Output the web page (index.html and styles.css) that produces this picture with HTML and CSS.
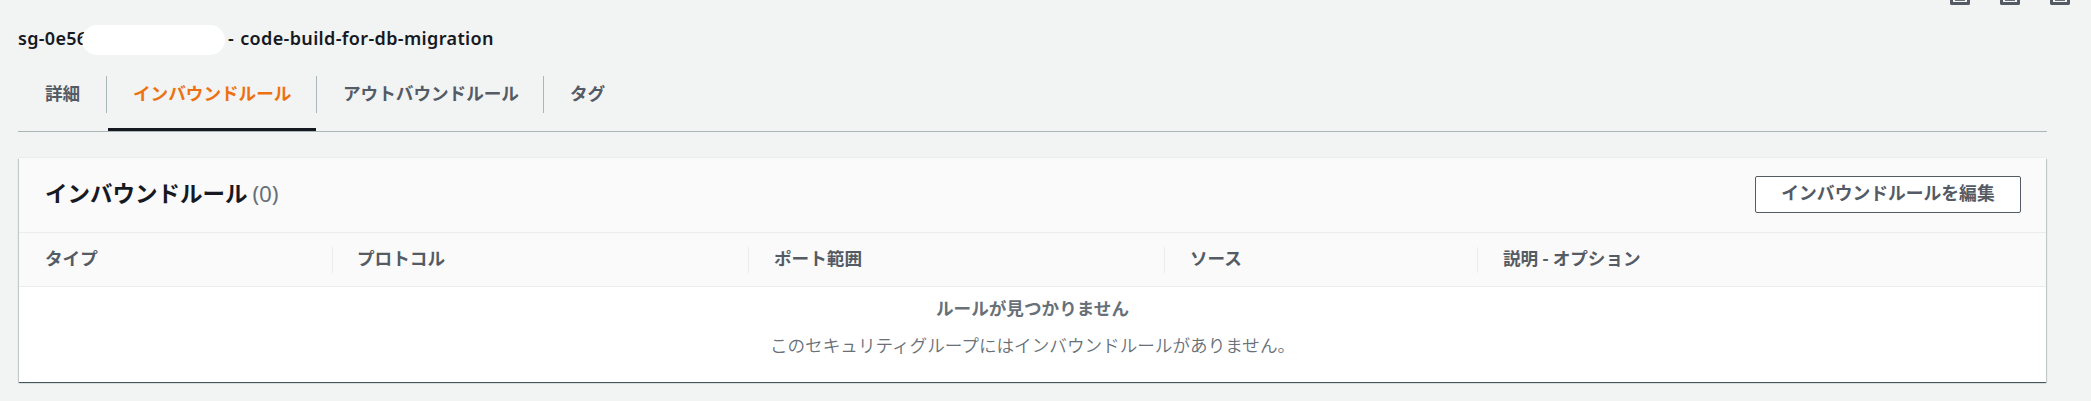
FILE: index.html
```
<!DOCTYPE html>
<html lang="ja">
<head>
<meta charset="utf-8">
<title>インバウンドルール</title>
<link rel="stylesheet" href="styles.css">
</head>
<body>
<div class="toolbar">
  <svg class="pane-icon" viewBox="0 0 20 5"><path d="M0 0h20v4l-1 1H1L0 4z" fill="#545b64"/><path d="M3 0h14v2H3z" fill="#f2f3f3"/><path d="M5 0h10v1H5z" fill="#687078"/></svg>
  <svg class="pane-icon" viewBox="0 0 20 5"><path d="M0 0h20v4l-1 1H1L0 4z" fill="#545b64"/><path d="M3 0h14v2H3z" fill="#f2f3f3"/><path d="M5 0h10v1H5z" fill="#687078"/></svg>
  <svg class="pane-icon" viewBox="0 0 20 5"><path d="M0 0h20v4l-1 1H1L0 4z" fill="#545b64"/><path d="M3 0h14v2H3z" fill="#f2f3f3"/><path d="M5 0h10v1H5z" fill="#687078"/></svg>
</div>
<main class="panel">
  <h1 class="resource"><span class="resource-id">sg-0e56</span><span class="mask"></span><span class="resource-name">- code-build-for-db-migration</span></h1>
  <nav class="tabs">
    <a class="tab tab-details"><span>詳細</span></a>
    <a class="tab tab-inbound active"><span>インバウンドルール</span></a>
    <a class="tab tab-outbound"><span>アウトバウンドルール</span></a>
    <a class="tab tab-tags"><span>タグ</span></a>
  </nav>
  <section class="card">
    <header class="card-header">
      <h2 class="card-title">インバウンドルール <span class="count">(0)</span></h2>
      <button class="edit">インバウンドルールを編集</button>
    </header>
    <div class="columns">
      <div class="col">タイプ</div>
      <div class="col">プロトコル</div>
      <div class="col">ポート範囲</div>
      <div class="col">ソース</div>
      <div class="col">説明 - オプション</div>
    </div>
    <div class="empty">
      <strong class="empty-title">ルールが見つかりません</strong>
      <p class="empty-text">このセキュリティグループにはインバウンドルールがありません。</p>
    </div>
  </section>
</main>
</body>
</html>
```
FILE: styles.css
```
* { box-sizing: border-box; }
body {
  margin: 0;
  height: 401px;
  overflow: hidden;
  background: #f2f3f3;
  color: #545b64;
  font: 17.6px/27px "Noto Sans CJK JP", sans-serif;
}
.toolbar { display: flex; justify-content: flex-end; gap: 30px; height: 5px; padding-right: 21px; }
.pane-icon { width: 20px; height: 5px; display: block; }
.panel { padding: 20px 44px 0 18px; }
.resource {
  display: flex;
  height: 30px;
  margin: 0;
  color: #16191f;
  font: 600 18px/26px "Noto Sans", "Open Sans", sans-serif;
  white-space: nowrap;
}
.resource-id { width: 64px; letter-spacing: .3px; }
.mask { position: relative; width: 143px; height: 30px; border-radius: 15px; background: #fff; }
.resource-name { margin-left: 3px; letter-spacing: .36px; word-spacing: 1px; }
.tabs { display: flex; height: 77px; padding-top: 21px; border-bottom: 1px solid #aab7b8; }
.tab { position: relative; height: 56px; font-weight: 700; white-space: nowrap; }
.tab span { display: block; height: 37px; padding: 3px 0 0 27px; border-right: 1px solid #aab7b8; }
.tab-details { width: 89px; }
.tab-inbound { width: 210px; }
.tab-outbound { width: 227px; }
.tab-tags span { border: 0; }
.tab-inbound span, .tab-outbound span, .tab-tags span { padding-left: 26px; }
.active { color: #ec7211; }
.active::after { content: ""; position: absolute; left: 1px; right: 1px; bottom: 1px; height: 3px; background: #16191f; }
.card {
  height: 224px;
  margin: 26px 1px 0;
  background: #fff;
  box-shadow: 0 1px 1px rgba(0, 28, 36, .3), 1px 1px 1px rgba(0, 28, 36, .15), -1px 1px 1px rgba(0, 28, 36, .15), 0 1px 0 #879196, 0 -1px 0 #eaeded;
}
.card-header {
  display: flex;
  justify-content: space-between;
  height: 74px;
  padding: 18px 25px 0 26px;
  background: #fafafa;
}
.card-title { margin: 0; color: #16191f; font-size: 22.5px; line-height: 33px; font-weight: 700; }
.count { color: #687078; font-weight: 400; font-family: "Noto Sans", sans-serif; letter-spacing: -.3px; }
.edit {
  width: 266px;
  height: 37px;
  padding: 0 0 4px;
  border: 1px solid #545b64;
  border-radius: 2px;
  background: #fff;
  color: #545b64;
  font: 700 17.8px/31px "Noto Sans CJK JP", sans-serif;
}
.columns {
  display: grid;
  grid-template-columns: 314px 416px 416px 313px 1fr;
  height: 55px;
  padding-top: 14px;
  border-top: 1px solid #eaeded;
  border-bottom: 1px solid #eaeded;
  background: #fafafa;
  font-weight: 700;
}
.col { height: 26px; padding-left: 26px; line-height: 22px; border-right: 1px solid #eaeded; }
.col:nth-child(n+2) { padding-left: 25px; }
.col:nth-child(2) { padding-left: 24px; }
.col:last-child { border: 0; }
.empty { padding-top: 7px; color: #687078; text-align: center; }
.empty-title { display: block; line-height: 27px; }
.empty-text { margin: 10px 0 0; font-weight: 350; line-height: 27px; }
```
